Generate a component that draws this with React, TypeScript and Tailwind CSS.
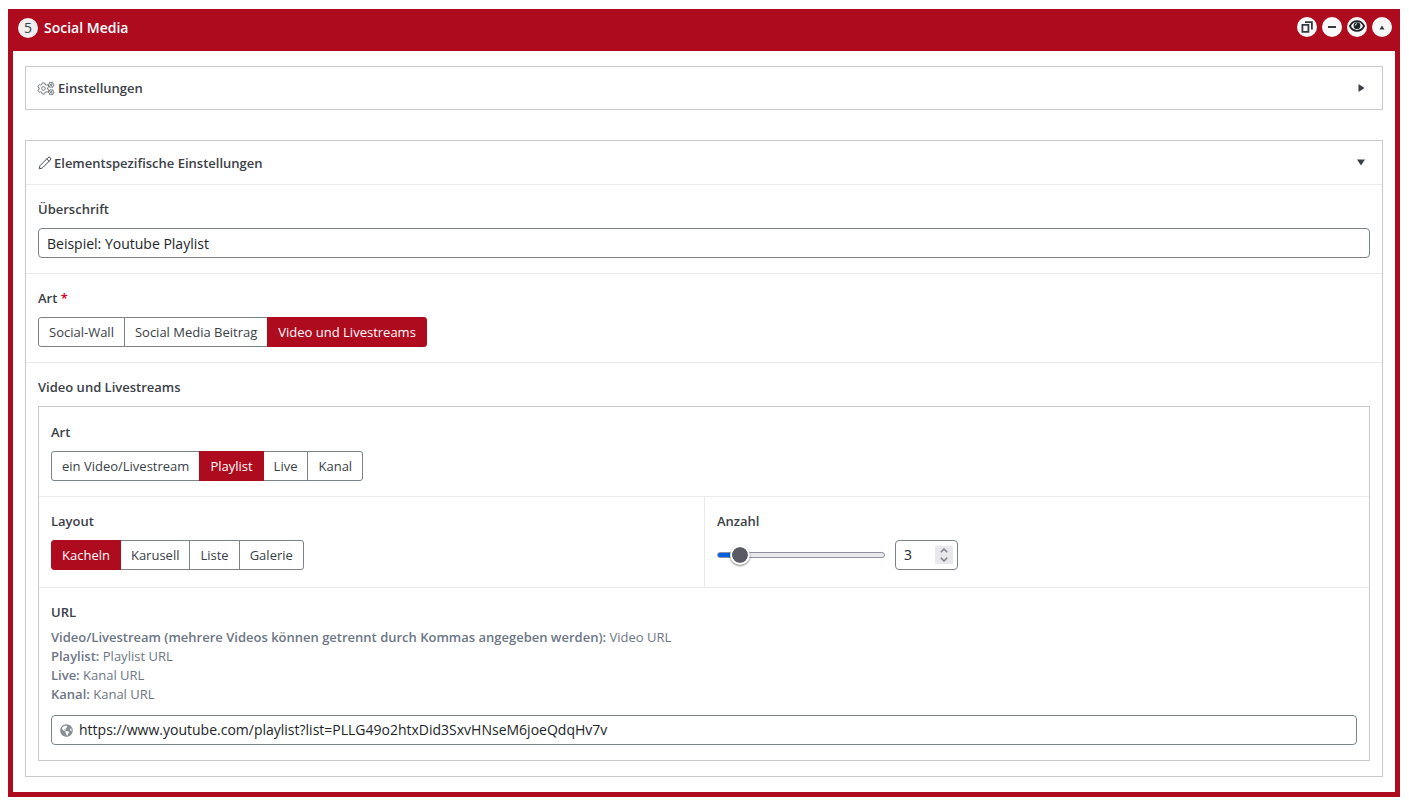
import { useState, type ReactNode } from 'react';
import { Pencil } from 'lucide-react';
import { FaCogs, FaGlobeAmericas } from 'react-icons/fa';
import clsx from 'clsx';

interface ButtonGroupProps {
  label: string;
  options: string[];
  initial: string;
}

function ButtonGroup({ label, options, initial }: ButtonGroupProps) {
  const [selected, setSelected] = useState(initial);

  return (
    <div role="group" aria-label={label} className="flex">
      {options.map((option) => (
        <button
          key={option}
          type="button"
          aria-pressed={option === selected}
          onClick={() => setSelected(option)}
          className={clsx(
            'h-[30px] px-2.5 border -ml-px first:ml-0 first:rounded-l-[3px] last:rounded-r-[3px]',
            option === selected ? 'relative bg-[#af0b1f] border-[#af0b1f] text-white' : 'bg-white border-[#7b838a]'
          )}
        >
          {option}
        </button>
      ))}
    </div>
  );
}

function FieldLabel({ children, htmlFor }: { children: ReactNode; htmlFor?: string }) {
  const className = 'block font-semibold';
  return htmlFor ? <label htmlFor={htmlFor} className={className}>{children}</label> : <h3 className={className}>{children}</h3>;
}

function RoundButton({ title, children }: { title: string; children: ReactNode }) {
  return (
    <button type="button" title={title} className="size-5 rounded-full bg-[#f8f8f8] text-[#343a40] flex items-center justify-center">
      {children}
    </button>
  );
}

function CountField() {
  const min = 1;
  const max = 25;
  const [count, setCount] = useState(3);
  const update = (value: number) => setCount(Math.min(max, Math.max(min, value)));
  const percent = 6 + ((count - min) / (max - min)) * 88;

  return (
    <div className="flex items-center gap-2.5">
      <input
        id="anzahl-slider"
        type="range"
        min={min}
        max={max}
        value={count}
        onChange={(e) => update(Number(e.target.value))}
        style={{ backgroundImage: `linear-gradient(to right, #0060df ${percent}%, #e9e9ed ${percent}%)` }}
        className="w-[168px] h-1.5 appearance-none rounded-full border border-[#8f8f9d] [&::-webkit-slider-thumb]:appearance-none [&::-webkit-slider-thumb]:size-5 [&::-webkit-slider-thumb]:rounded-full [&::-webkit-slider-thumb]:bg-[#5b5b66] [&::-webkit-slider-thumb]:bg-clip-padding [&::-webkit-slider-thumb]:border-2 [&::-webkit-slider-thumb]:border-solid [&::-webkit-slider-thumb]:border-white [&::-webkit-slider-thumb]:shadow-[0_1px_2px_rgba(0,0,0,0.5)]"
      />
      <div className="w-[63px] h-[30px] px-1 border border-[#7b838a] rounded flex items-center">
        <input
          type="number"
          aria-label="Anzahl"
          min={min}
          max={max}
          value={count}
          onChange={(e) => update(Number(e.target.value))}
          className="min-w-0 flex-1 pl-1 text-sm text-[#212529] outline-none [appearance:textfield] [&::-webkit-inner-spin-button]:appearance-none"
        />
        <div className="size-[18px] bg-[#e9e9ed] text-[#7b7b85] flex flex-col">
          <button type="button" aria-label="Erhöhen" onClick={() => update(count + 1)} className="flex-1 flex items-center justify-center">
            <svg width="8" height="5" viewBox="0 0 8 5" fill="none" stroke="currentColor" strokeWidth="1.4"><path d="M.8 4.3 4 1l3.2 3.3" /></svg>
          </button>
          <button type="button" aria-label="Verringern" onClick={() => update(count - 1)} className="flex-1 flex items-center justify-center">
            <svg width="8" height="5" viewBox="0 0 8 5" fill="none" stroke="currentColor" strokeWidth="1.4"><path d="M.8.7 4 4 7.2.7" /></svg>
          </button>
        </div>
      </div>
    </div>
  );
}

const urlHints = [
  { name: 'Video/Livestream (mehrere Videos können getrennt durch Kommas angegeben werden):', value: 'Video URL' },
  { name: 'Playlist:', value: 'Playlist URL' },
  { name: 'Live:', value: 'Kanal URL' },
  { name: 'Kanal:', value: 'Kanal URL' }
];

export default function App() {
  const [title, setTitle] = useState('Beispiel: Youtube Playlist');
  const [url, setUrl] = useState('https://www.youtube.com/playlist?list=PLLG49o2htxDid3SxvHNseM6joeQdqHv7v');

  return (
    <div className="pt-[9px] pl-2 pr-[9px] pb-1 font-['Open_Sans',sans-serif] text-[13px] leading-5 text-[#3a4047]">
      <section className="bg-[#af0b1f] px-[5px] pb-[5px]">
        <header className="flex items-start justify-between pt-2 pb-3 pl-[5px] pr-[3px]">
          <div className="h-[22px] flex items-center gap-1.5 text-white">
            <span className="size-5 rounded-full bg-[#f0f0f0] text-sm leading-5 text-[#3a4047] flex items-center justify-center">5</span>
            <h1 className="text-sm font-semibold">Social Media</h1>
          </div>
          <div className="flex gap-[5px]">
            <RoundButton title="Duplizieren">
              <svg width="12" height="12" viewBox="0 0 12 12" fill="none" stroke="currentColor" strokeWidth="1.8">
                <path d="M1.4 3.9h6v6.9h-6z" />
                <path d="M4 1.1h6.9v7.5" />
              </svg>
            </RoundButton>
            <RoundButton title="Entfernen">
              <svg width="8" height="2" viewBox="0 0 8 2" fill="currentColor"><path d="M0 0h8v2H0z" /></svg>
            </RoundButton>
            <RoundButton title="Sichtbarkeit">
              <svg width="16" height="14" viewBox="0 0 16 14" className="text-[#212529]">
                <path d="M8 1.2C4.8 1.2 2.3 3.4.9 6 2.3 8.9 4.8 10.9 8 10.9s5.7-2 7.1-4.9C13.7 3.4 11.2 1.2 8 1.2z" fill="none" stroke="currentColor" strokeWidth="1.8" />
                <circle cx="8" cy="5.7" r="3.4" fill="currentColor" />
                <path d="M6.2 5.5A1.9 1.9 0 0 1 8 3.7" fill="none" stroke="#fff" strokeWidth=".9" />
              </svg>
            </RoundButton>
            <RoundButton title="Einklappen">
              <svg width="6" height="5" viewBox="0 0 6 5" fill="currentColor"><path d="M3 .5 5.5 4.5h-5z" /></svg>
            </RoundButton>
          </div>
        </header>

        <div className="bg-white px-3 py-[15px] flex flex-col gap-[30px]">
          <button type="button" className="h-11 px-3 border border-[#c8cacc] flex items-center text-left">
            <FaCogs fill="none" stroke="currentColor" strokeWidth={28} className="w-4 h-[13px] mr-1 overflow-visible" />
            <span className="flex-1 font-semibold">Einstellungen</span>
            <svg width="7" height="8" viewBox="0 0 7 8" fill="currentColor" className="mr-[5px]"><path d="M.5 0 6.5 4l-6 4z" /></svg>
          </button>

          <div className="border border-[#c8cacc] divide-y divide-[#e9eaeb]">
            <button type="button" className="w-full h-11 px-3 flex items-center text-left">
              <Pencil size={14} strokeWidth={1.6} className="mr-0.5" />
              <span className="flex-1 font-semibold">Elementspezifische Einstellungen</span>
              <svg width="8" height="7" viewBox="0 0 8 7" fill="currentColor" className="mr-[5px]"><path d="M0 .5h8l-4 6z" /></svg>
            </button>

            <div className="px-3 pt-3.5 pb-[15px] flex flex-col gap-[9px]">
              <FieldLabel htmlFor="ueberschrift">Überschrift</FieldLabel>
              <input
                id="ueberschrift"
                type="text"
                value={title}
                onChange={(e) => setTitle(e.target.value)}
                className="h-[30px] px-2 border border-[#7b838a] rounded text-sm text-[#212529]"
              />
            </div>

            <div className="px-3 pt-3.5 pb-[15px] flex flex-col gap-[9px]">
              <FieldLabel>Art <span className="text-[#e0001a]">*</span></FieldLabel>
              <ButtonGroup label="Art" options={['Social-Wall', 'Social Media Beitrag', 'Video und Livestreams']} initial="Video und Livestreams" />
            </div>

            <div className="px-3 pt-3.5 pb-[15px] flex flex-col gap-[9px]">
              <FieldLabel>Video und Livestreams</FieldLabel>
              <div className="border border-[#c8cacc] divide-y divide-[#e9eaeb]">
                <div className="px-3 py-[15px] flex flex-col gap-[9px]">
                  <FieldLabel>Art</FieldLabel>
                  <ButtonGroup label="Art des Videos" options={['ein Video/Livestream', 'Playlist', 'Live', 'Kanal']} initial="Playlist" />
                </div>

                <div className="grid grid-cols-2">
                  <div className="px-3 pt-3.5 pb-[17px] flex flex-col gap-[9px]">
                    <FieldLabel>Layout</FieldLabel>
                    <ButtonGroup label="Layout" options={['Kacheln', 'Karusell', 'Liste', 'Galerie']} initial="Kacheln" />
                  </div>
                  <div className="px-3 pt-3.5 pb-[17px] border-l border-[#e9eaeb] flex flex-col gap-[9px]">
                    <FieldLabel htmlFor="anzahl-slider">Anzahl</FieldLabel>
                    <CountField />
                  </div>
                </div>

                <div className="px-3 pt-3.5 pb-[15px]">
                  <FieldLabel htmlFor="url">URL</FieldLabel>
                  <div className="mt-1.5 mb-[11px] leading-[19px] text-[#6c7686]">
                    {urlHints.map((hint) => (
                      <p key={hint.name}><strong className="font-semibold">{hint.name}</strong> {hint.value}</p>
                    ))}
                  </div>
                  <div className="h-[30px] px-2 border border-[#7b838a] rounded flex items-center gap-1.5">
                    <FaGlobeAmericas size={13} className="text-[#868e96]" />
                    <input
                      id="url"
                      type="url"
                      value={url}
                      onChange={(e) => setUrl(e.target.value)}
                      className="min-w-0 flex-1 text-sm text-[#212529] outline-none"
                    />
                  </div>
                </div>
              </div>
            </div>
          </div>
        </div>
      </section>
    </div>
  );
}
